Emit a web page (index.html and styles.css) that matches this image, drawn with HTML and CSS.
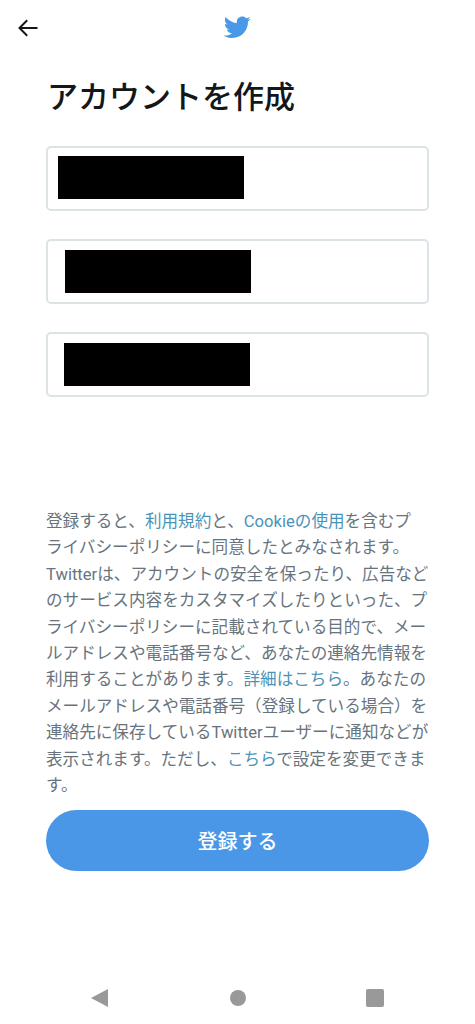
FILE: index.html
```html
<!DOCTYPE html>
<html lang="ja">
<head>
  <meta charset="UTF-8" />
  <meta name="viewport" content="width=device-width, initial-scale=1.0"/>
  <title>アカウントを作成</title>
  <link rel="stylesheet" href="styles.css">
</head>
<body>
  <div class="screen">
    <div class="top-bar">
      <svg class="back-icon" viewBox="0 0 20 18" width="20" height="18">
        <path d="M19.5 9H1.800M9.200 1.200 1.500 9l7.700 7.800" fill="none" stroke="#14171a" stroke-width="2"/>
      </svg>
      <svg class="bird" viewBox="0 0 24 24" width="27" height="27">
        <path fill="#4a99e9" d="M23.600 4.500c-.9.400-1.800.7-2.800.8 1-.6 1.800-1.600 2.100-2.700-.9.600-2 1-3.100 1.200-.9-1-2.200-1.500-3.600-1.500-2.700 0-4.900 2.200-4.900 4.900 0 .4 0 .8.100 1.100C7.400 7.600 3.800 5.700 1.400 2.700 1 3.400.8 4.300.8 5.200c0 1.700.9 3.200 2.200 4.100-.8 0-1.600-.2-2.200-.6v.1c0 2.400 1.700 4.400 3.900 4.800-.4.100-.8.200-1.300.2-.3 0-.6 0-.9-.1.600 2 2.400 3.400 4.600 3.400-1.700 1.300-3.800 2.100-6.100 2.100-.4 0-.8 0-1.200-.1 2.200 1.400 4.800 2.200 7.500 2.200 9.100 0 14-7.500 14-14v-.6c1-.7 1.800-1.600 2.500-2.500z"/>
      </svg>
    </div>

    <h1 class="title">アカウントを作成</h1>

    <div class="fields">
      <div class="field field-a"><span class="redacted"></span></div>
      <div class="field field-b"><span class="redacted"></span></div>
      <div class="field field-c"><span class="redacted"></span></div>
    </div>

    <p class="legal">登録すると、<a href="#">利用規約</a>と、<a href="#">Cookieの使用</a>を含むプ<br>ライバシーポリシーに同意したとみなされます。<br>Twitterは、アカウントの安全を保ったり、広告などのサービス内容をカスタマイズしたりといった、プライバシーポリシーに記載されている目的で、メールアドレスや電話番号など、あなたの連絡先情報を利用することがあります。<a href="#">詳細はこちら</a>。あなたのメールアドレスや電話番号（登録している場合）を連絡先に保存しているTwitterユーザーに通知などが表示されます。ただし、<a href="#">こちら</a>で設定を変更できます。</p>

    <button class="submit">登録する</button>

    <div class="nav-bar">
      <svg viewBox="0 0 18 18" width="18" height="18"><path fill="#999" d="M17 0v18L0 9z"/></svg>
      <svg viewBox="0 0 16 16" width="16" height="16"><circle cx="8" cy="8" r="8" fill="#999"/></svg>
      <svg viewBox="0 0 18 18" width="18" height="18"><rect width="18" height="18" rx="2" fill="#999"/></svg>
    </div>
  </div>
</body>
</html>
```

FILE: styles.css
```css
body {
  font-family: 'Roboto', 'Noto Sans CJK JP', sans-serif;
  background-color: #fff;
  margin: 0;
  padding: 0;
}

.screen {
  display: flex;
  flex-direction: column;
  height: 1024px;
  width: 475px;
  overflow: hidden;
}

.top-bar {
  position: relative;
  display: flex;
  justify-content: center;
  height: 56px;
  padding-top: 14px;
  box-sizing: border-box;
}

.back-icon {
  position: absolute;
  left: 18px;
  top: 19px;
}

.title {
  margin: 19px 0 0 47px;
  font-size: 31px;
  line-height: 46px;
  font-weight: 500;
  color: #14171a;
}

.fields {
  display: flex;
  flex-direction: column;
  gap: 28px;
  margin: 25px 46px 0;
}

.field {
  display: flex;
  align-items: center;
  height: 65px;
  box-sizing: border-box;
  border: 2px solid #dce3e6;
  border-radius: 5px;
}

.field-a { padding: 0 0 2px 10px; }
.field-b { padding-left: 17px; }
.field-c { padding-left: 16px; }

.redacted {
  width: 186px;
  height: 43px;
  background-color: #000;
}

.legal {
  margin: 112px 46px 0;
  font-size: 16.6px;
  line-height: 26.4px;
  color: #68747d;
  text-spacing-trim: space-all;
}

.legal a {
  color: #4a93b8;
  text-decoration: none;
}

.submit {
  margin: 11px 46px 0;
  height: 61px;
  background-color: #4a97e8;
  color: #fff;
  border: none;
  border-radius: 31px;
  font-family: inherit;
  font-size: 20px;
  font-weight: 500;
}

.nav-bar {
  display: flex;
  justify-content: space-between;
  align-items: center;
  margin: 118px 91px 0;
}
```
